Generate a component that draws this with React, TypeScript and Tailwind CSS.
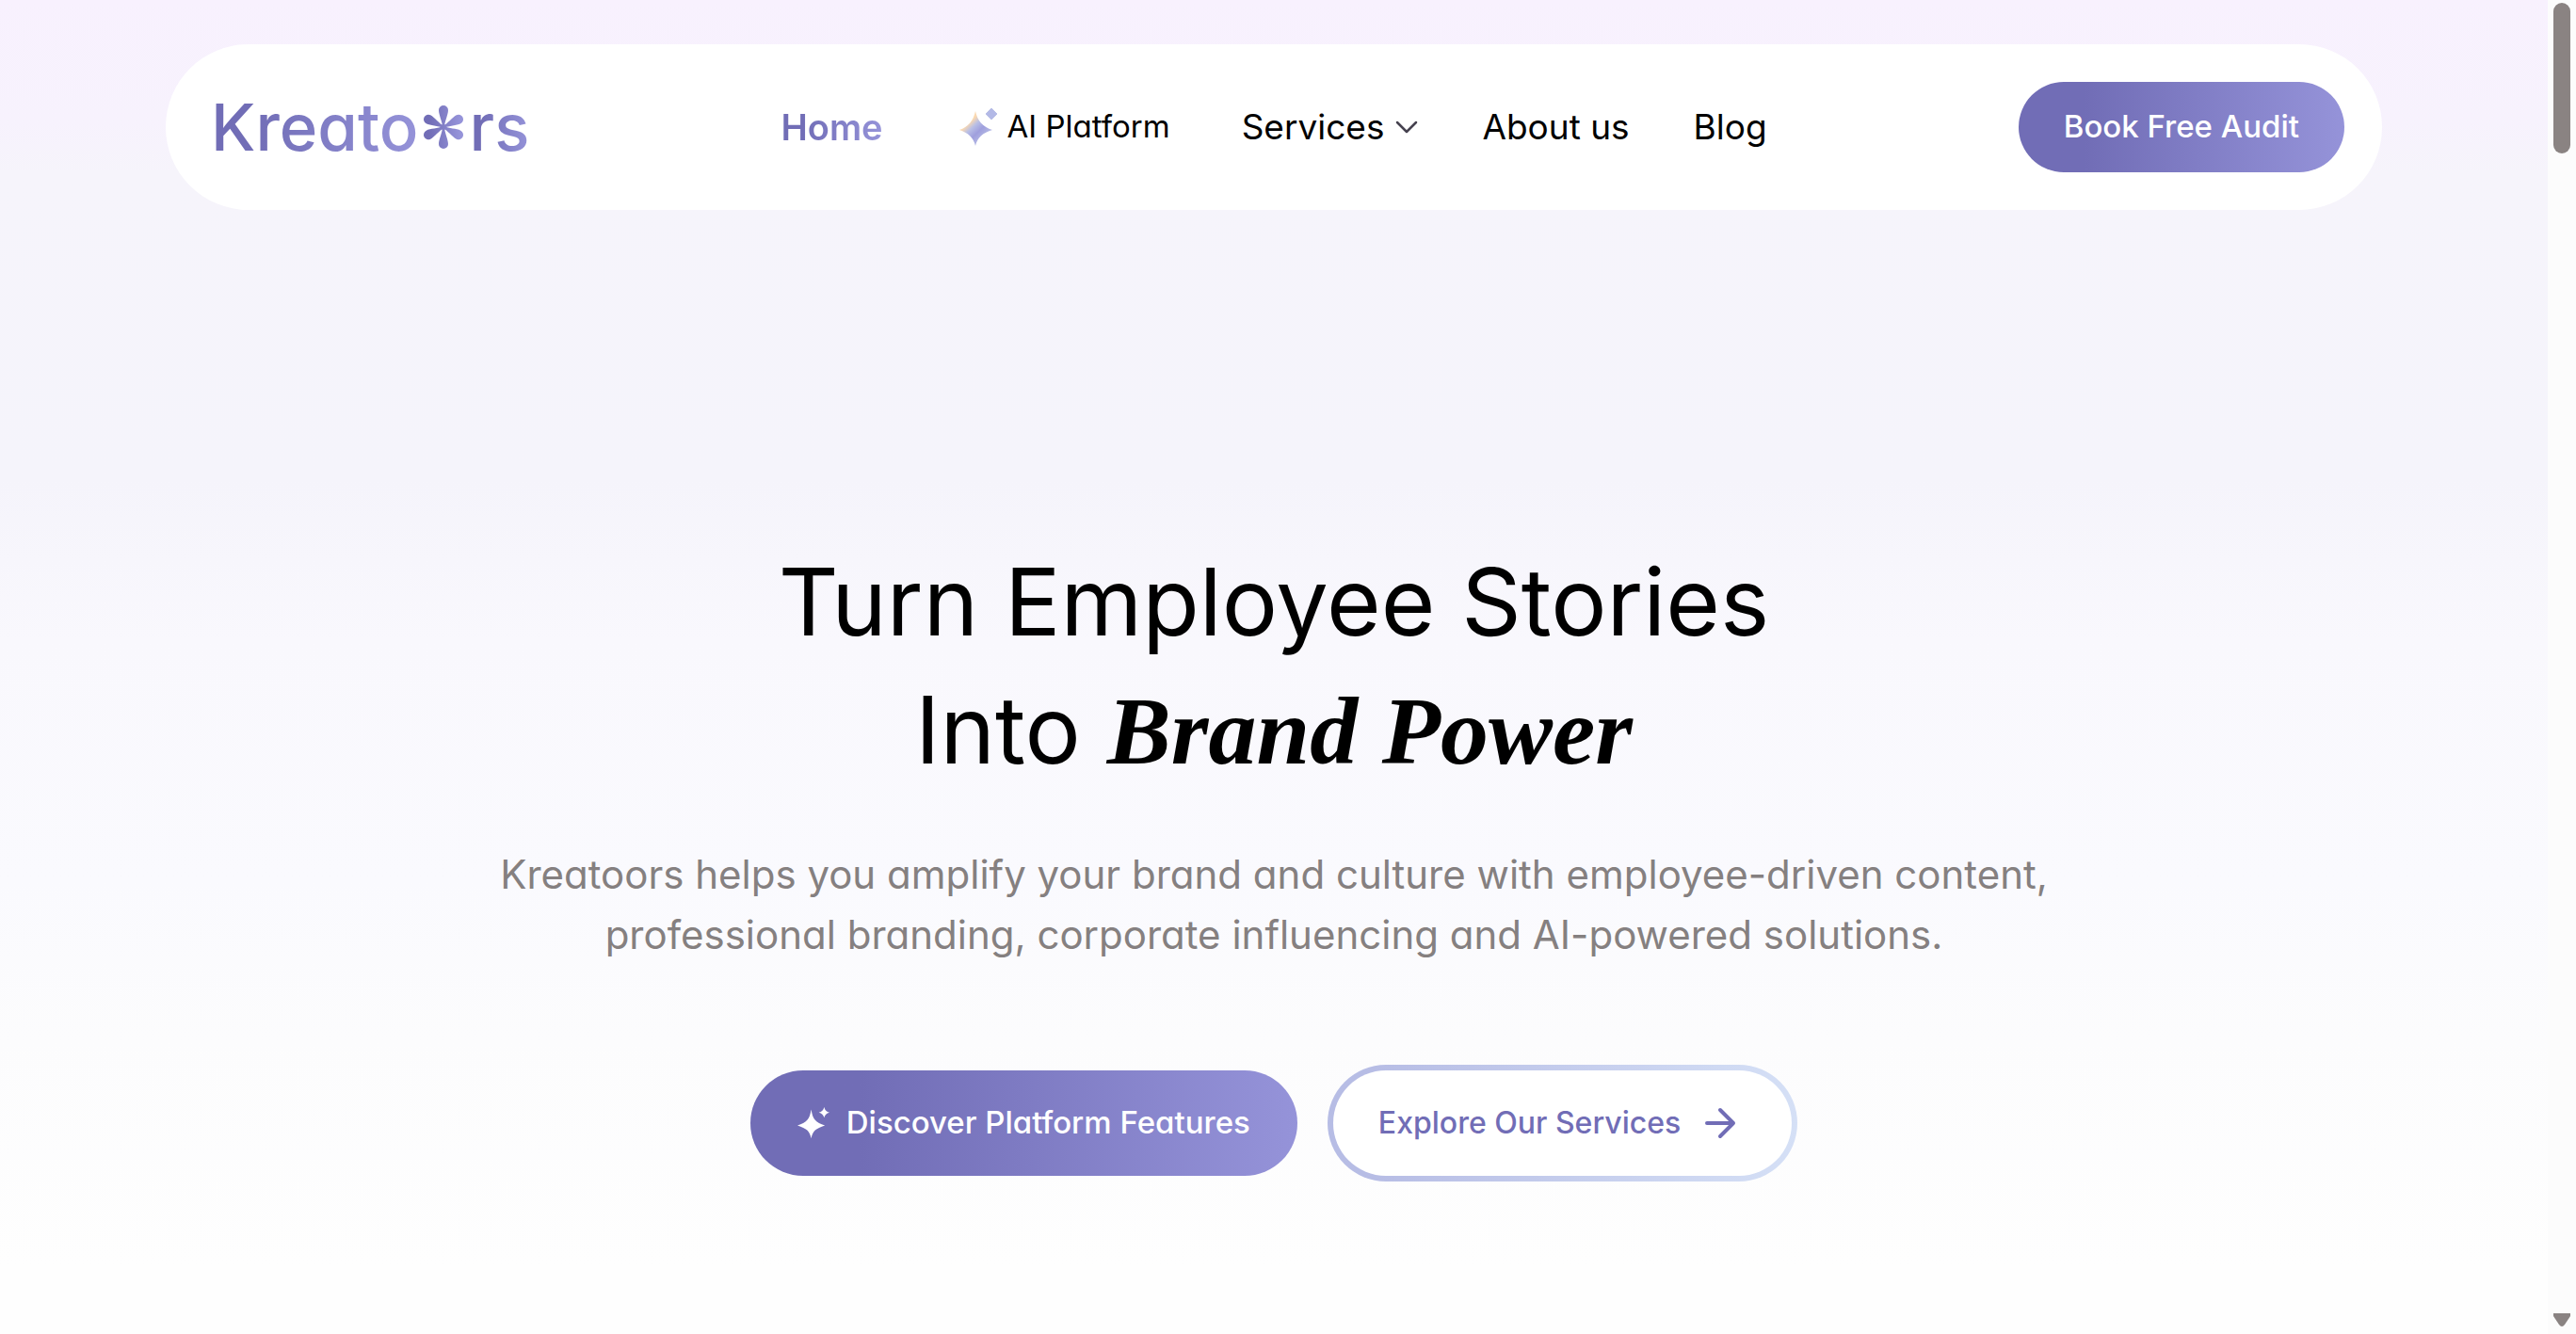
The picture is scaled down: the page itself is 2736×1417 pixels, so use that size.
import type { ReactNode } from 'react';

const brandGradient = 'bg-linear-to-r from-[#716db6] from-20% to-[#9593d9]';

const navLinks = ['About us', 'Blog'];

function Petals() {
  return (
    <svg className="h-12 w-[46px]" viewBox="-23 -24 46 48" aria-hidden="true">
      <defs>
        <linearGradient id="petals" gradientUnits="userSpaceOnUse" x1="-22" y1="0" x2="22" y2="0">
          <stop offset="0.15" stopColor="#716db6" />
          <stop offset="0.9" stopColor="#9593d9" />
        </linearGradient>
        <mask id="petal-mask" maskUnits="userSpaceOnUse" x="-24" y="-24" width="48" height="48">
          <g fill="#fff">
            {[0, 63, 117, 180, 243, 297].map((angle) => (
              <path key={angle} transform={`rotate(${angle})`} d="M-1 0C-1.2-6-5-13-5-18a5 5 0 0 1 10 0C5-13 1.2-6 1 0Z" />
            ))}
            <circle r="3" />
          </g>
        </mask>
      </defs>
      <rect x="-24" y="-24" width="48" height="48" fill="url(#petals)" mask="url(#petal-mask)" />
    </svg>
  );
}

function Logo() {
  return (
    <a href="#" aria-label="Kreatoors" className="flex items-center gap-1 text-[69px] leading-none font-medium">
      <span className={`bg-clip-text text-transparent ${brandGradient}`}>Kreato</span>
      <Petals />
      <span className={`bg-clip-text text-transparent ${brandGradient}`}>rs</span>
    </a>
  );
}

function SparkleIcon({ className, fill = 'currentColor', children }: { className: string; fill?: string; children?: ReactNode }) {
  return (
    <svg className={className} viewBox="0 0 42 42" fill={fill} aria-hidden="true">
      {children}
      <path d="M18 3C20 16 24 20 36 24C24 28 20 31 18 41C16 31 12 28 0 24C12 20 16 16 18 3Z" />
      <path d="M35 0C36 4 38 6 42 7C38 8 36 10 35 14C34 10 32 8 28 7C32 6 34 4 35 0Z" />
    </svg>
  );
}

function AiSparkle() {
  return (
    <svg className="size-[42px]" viewBox="0 0 42 42" fill="url(#sparkle)" aria-hidden="true">
      <defs>
        <linearGradient id="sparkle" gradientUnits="userSpaceOnUse" x1="6" y1="13" x2="27" y2="35">
          <stop offset="0.2" stopColor="#fbd9b0" />
          <stop offset="0.4" stopColor="#b9bfe6" />
          <stop offset="0.65" stopColor="#9f9fdd" />
          <stop offset="1" stopColor="#b9bfe6" />
        </linearGradient>
      </defs>
      <path d="M18 4C20 14 26 21 36 24C26 27 20 32 18 41C16 32 10 27 1 24C10 21 16 14 18 4Z" />
      <path fill="#b3b9e6" d="M35 1L41 7L35 13L29 7Z" stroke="#b9bfe6" strokeLinejoin="round" />
    </svg>
  );
}

function Header() {
  return (
    <header className="flex h-44 items-center justify-between rounded-full bg-white pr-10 pl-12">
      <Logo />
      <nav className="flex items-center text-[37px] text-black">
        <a href="#" className={`bg-clip-text text-[38px] font-semibold text-transparent ${brandGradient}`}>Home</a>
        <a href="#" className="ml-20 flex items-center gap-2.5 text-[33px]">
          <AiSparkle />
          AI Platform
        </a>
        <button type="button" className="ml-[76px] flex items-center gap-3">
          Services
          <svg className="h-4 w-6" viewBox="0 0 24 16" fill="none" stroke="#46424f" strokeWidth="2.5" strokeLinecap="round" strokeLinejoin="round" aria-hidden="true">
            <path d="M2 3l10 10L22 3" />
          </svg>
        </button>
        {navLinks.map((label) => (
          <a key={label} href="#" className="ml-[68px]">{label}</a>
        ))}
      </nav>
      <button type="button" className={`h-24 rounded-full px-12 text-[33px] font-medium text-white ${brandGradient}`}>
        Book Free Audit
      </button>
    </header>
  );
}

function Hero() {
  return (
    <main className="flex flex-col items-center pt-[348px] text-center">
      <h1 className="text-[99px] leading-[136px] text-black">
        Turn Employee Stories
        <br />
        Into <em className="font-['Liberation_Serif',serif] text-[102px] font-bold">Brand Power</em>
      </h1>
      <p className="mt-[52px] text-[42px] leading-16 text-[#858080]">
        Kreatoors helps you amplify your brand and culture with employee-driven content,
        <br />
        professional branding, corporate influencing and AI-powered solutions.
      </p>
      <div className="mt-[106px] flex items-center gap-8 text-[33px] font-medium">
        <button type="button" className={`flex h-28 items-center gap-[18px] rounded-full px-[50px] text-white ${brandGradient}`}>
          <SparkleIcon className="size-[34px]" />
          Discover Platform Features
        </button>
        <div className="rounded-full bg-linear-to-r from-[#b7bde5] from-10% to-[#d5e0f6] p-1.5">
          <button type="button" className="flex h-28 items-center gap-6 rounded-full bg-white pr-[58px] pl-12 text-[32px] text-[#716db6]">
            Explore Our Services
            <svg className="size-9" viewBox="0 0 36 36" fill="none" stroke="currentColor" strokeWidth="4" strokeLinecap="round" strokeLinejoin="round" aria-hidden="true">
              <path d="M4 18h28M18 4l14 14-14 14" />
            </svg>
          </button>
        </div>
      </div>
    </main>
  );
}

function Scrollbar() {
  return (
    <div className="flex w-[30px] shrink-0 flex-col items-center justify-between bg-[#fcfcfc] pt-[3px] pb-2" aria-hidden="true">
      <div className="h-40 w-[18px] rounded-full bg-[#8a8382]" />
      <svg className="h-3.5 w-[18px]" viewBox="0 0 18 14" fill="#8a8382">
        <path d="M0 0h18v3l-6 9q-3 4-6 0L0 3Z" />
      </svg>
    </div>
  );
}

export default function App() {
  return (
    <div className="flex h-screen overflow-hidden font-[Inter,sans-serif] [font-feature-settings:'cv11']">
      <div className="flex-1 bg-[linear-gradient(to_bottom,#f8f1fe_0%,#f7f2fd_9%,#f6f4fb_13%,#f5f4fb_36%,#f9f8fd_48%,#fafafe_66%,#fcfcfd_78%,#fefefe_95%)] px-44 pt-[47px]">
        <Header />
        <Hero />
      </div>
      <Scrollbar />
    </div>
  );
}
